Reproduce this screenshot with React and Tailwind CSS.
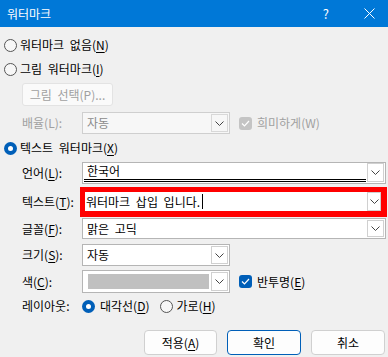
import React from "react";

const Chevron = () => (
  <svg width="9" height="5" viewBox="0 0 9 5" className="block">
    <path d="M0.5 0.5 L4.5 4.5 L8.5 0.5" fill="none" stroke="#444" strokeWidth="1" />
  </svg>
);

const DropBtn = ({ disabled }) => (
  <div className={`w-[17px] self-stretch m-[1px] flex items-center justify-center border ${disabled ? "border-[#d8d8d8] bg-[#f7f7f7]" : "border-[#d0d0d0] bg-white"}`}>
    <Chevron />
  </div>
);

const Radio = ({ checked }) =>
  checked ? (
    <div className="w-[13px] h-[13px] rounded-full bg-[#005fb8] flex items-center justify-center shrink-0">
      <div className="w-[5px] h-[5px] rounded-full bg-white" />
    </div>
  ) : (
    <div className="w-[13px] h-[13px] rounded-full border border-[#555] bg-[#f7f7f7] shrink-0" />
  );

const Check = ({ disabled }) => (
  <div className={`w-[13px] h-[13px] rounded-[3px] flex items-center justify-center shrink-0 ${disabled ? "bg-[#c4c4c4]" : "bg-[#005fb8]"}`}>
    <svg width="9" height="7" viewBox="0 0 9 7">
      <path d="M1 3.5 L3.5 6 L8 1" fill="none" stroke="white" strokeWidth="1.2" />
    </svg>
  </div>
);

const Label = ({ children, gray }) => (
  <div className={`w-[60px] shrink-0 ${gray ? "text-[#a0a0a0]" : ""}`}>{children}</div>
);

export default function App() {
  return (
    <div className="w-[388px] h-[357px] bg-[#f0f0f0] text-[12px] leading-[16px] text-black [word-spacing:3px] font-['Noto_Sans_CJK_KR',sans-serif] flex flex-col">
      <div className="h-[27px] bg-[#0078d7] text-white flex items-center pl-[7px] shrink-0">
        <span>워터마크</span>
        <span className="ml-auto mr-[35px] text-[13px]">?</span>
        <svg width="11" height="11" viewBox="0 0 11 11" className="mr-[13px]">
          <path d="M0.5 0.5 L10.5 10.5 M10.5 0.5 L0.5 10.5" stroke="white" strokeWidth="1" />
        </svg>
      </div>

      <div className="mt-[8px] h-[20px] flex items-center pl-[4px] gap-[3px]">
        <Radio />
        <span>워터마크 없음(<u className="underline-offset-2">N</u>)</span>
      </div>
      <div className="mt-[4px] h-[20px] flex items-center pl-[4px] gap-[3px]">
        <Radio />
        <span>그림 워터마크(<u className="underline-offset-2">I</u>)</span>
      </div>
      <div className="mt-[4px] ml-[22px] w-[91px] h-[23px] border border-[#e3e3e3] bg-[#fafafa] rounded-[3px] flex items-center justify-center text-[#a0a0a0]">
        그림 선택(P)...
      </div>

      <div className="mt-[6px] h-[22px] flex items-center pl-[22px]">
        <Label gray>배율(L):</Label>
        <div className="w-[148px] h-[22px] border border-[#cfcfcf] bg-[#f7f7f7] flex items-stretch">
          <div className="flex-1 pl-[4px] flex items-center text-[#8a8a8a]">자동</div>
          <DropBtn disabled />
        </div>
        <div className="ml-[9px] flex items-center gap-[5px] text-[#a0a0a0]">
          <Check disabled />
          <span>희미하게(W)</span>
        </div>
      </div>

      <div className="mt-[4px] h-[20px] flex items-center pl-[4px] gap-[3px]">
        <Radio checked />
        <span>텍스트 워터마크(<u className="underline-offset-2">X</u>)</span>
      </div>

      <div className="mt-[4px] h-[22px] flex items-center pl-[22px]">
        <Label>언어(<u className="underline-offset-2">L</u>):</Label>
        <div className="w-[304px] h-[22px] border border-[#b5b5b5] bg-white flex items-start">
          <div className="flex-1 ml-[1px] h-[19px] pl-[3px] border-b-[3px] border-double border-black flex items-center">한국어</div>
          <div className="w-[17px] h-[19px] mx-[1px] flex items-center justify-center border border-[#d0d0d0] bg-white">
            <Chevron />
          </div>
        </div>
      </div>

      <div className="mt-[3px] h-[30px] flex items-center pl-[22px]">
        <Label>텍스트(<u className="underline-offset-2">T</u>):</Label>
        <div className="-ml-[2px] w-[307px] h-[30px] border-t-[5px] border-l-[5px] border-r-[6px] border-b-[6px] border-[#ff0000] bg-white flex items-stretch">
          <div className="flex-1 pl-[1px] flex items-center">
            <span>워터마크 삽입 입니다.</span>
            <span className="w-[1px] h-[15px] bg-black ml-[2px]" />
          </div>
          <div className="w-[14px] flex items-center justify-center border border-[#d0d0d0] bg-white">
            <Chevron />
          </div>
        </div>
      </div>

      <div className="mt-[1px] h-[21px] flex items-center pl-[22px]">
        <Label>글꼴(<u className="underline-offset-2">F</u>):</Label>
        <div className="w-[304px] h-[21px] border border-[#b5b5b5] bg-white flex items-stretch">
          <div className="flex-1 pl-[4px] flex items-center">맑은 고딕</div>
          <DropBtn />
        </div>
      </div>

      <div className="mt-[5px] h-[22px] flex items-center pl-[22px]">
        <Label>크기(<u className="underline-offset-2">S</u>):</Label>
        <div className="w-[148px] h-[22px] border border-[#b5b5b5] bg-white flex items-stretch">
          <div className="flex-1 pl-[4px] flex items-center">자동</div>
          <DropBtn />
        </div>
      </div>

      <div className="mt-[4px] h-[23px] flex items-center pl-[22px]">
        <Label>색(<u className="underline-offset-2">C</u>):</Label>
        <div className="w-[148px] h-[23px] border border-[#b5b5b5] bg-white flex items-stretch">
          <div className="flex-1 my-[3px] ml-[5px] mr-[1px] bg-[#c0c0c0]" />
          <DropBtn />
        </div>
        <div className="ml-[9px] flex items-center gap-[5px]">
          <Check />
          <span>반투명(<u className="underline-offset-2">E</u>)</span>
        </div>
      </div>

      <div className="mt-[3px] h-[20px] flex items-center pl-[22px]">
        <Label>레이아웃:</Label>
        <div className="flex items-center gap-[5px]">
          <Radio checked />
          <span>대각선(<u className="underline-offset-2">D</u>)</span>
        </div>
        <div className="ml-[10px] flex items-center gap-[4px]">
          <Radio />
          <span>가로(<u className="underline-offset-2">H</u>)</span>
        </div>
      </div>

      <div className="mt-[14px] flex justify-end gap-[10px] pr-[3px]">
        <div className="w-[73px] h-[25px] border border-[#d0d0d0] bg-[#fdfdfd] rounded-[4px] flex items-center justify-center">
          적용(<u className="underline-offset-2">A</u>)
        </div>
        <div className="w-[74px] h-[25px] border border-[#005fb8] bg-[#fdfdfd] rounded-[4px] flex items-center justify-center">
          확인
        </div>
        <div className="w-[74px] h-[25px] border border-[#d0d0d0] bg-[#fdfdfd] rounded-[4px] flex items-center justify-center">
          취소
        </div>
      </div>
    </div>
  );
}
